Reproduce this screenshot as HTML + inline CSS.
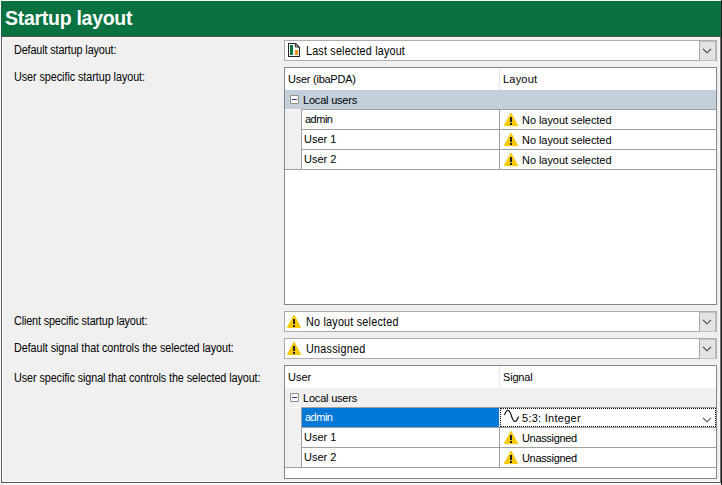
<!DOCTYPE html>
<html><head><meta charset="utf-8">
<style>
html,body{margin:0;padding:0;}
body{width:722px;height:485px;overflow:hidden;position:relative;background:#f4f4f4;font-family:"Liberation Sans",sans-serif;font-size:12px;color:#000;}
.a{position:absolute;}
.ic{position:absolute;display:block;}
.t{position:absolute;white-space:nowrap;line-height:14px;height:14px;}
.hdr{left:1px;top:1px;width:720px;height:35px;background:#0a7140;}
.title{left:5px;top:7px;font-size:19.5px;font-weight:bold;color:#fff;letter-spacing:-0.28px;line-height:22px;height:22px;}
.frame{left:1px;top:36px;width:719px;height:445px;border:1px solid #5a5a5a;border-right-color:#222;background:#f0f0f0;}
.inner{left:2px;top:37px;width:717px;height:443px;border:1px solid #fafafa;border-right-color:#f6f6f6;}
.combo{position:absolute;left:284px;width:431px;height:19px;border:1px solid #abadb3;background:#fff;}
.tbl{position:absolute;left:284px;width:431px;border:1px solid #828790;background:#fff;}
.minus{position:absolute;left:5px;top:5px;width:7px;height:7px;border:1px solid #8e8e8e;border-radius:1px;background:#fbfbfb;}
.minus:after{content:"";position:absolute;left:1px;top:3px;width:5px;height:1px;background:#253a8a;}
</style></head><body>
<div class="a" style="left:0;top:0;width:722px;height:485px;background:#fafafa"></div>
<div class="a" style="left:1px;top:36px;width:719px;height:446px;background:#f0f0f0"></div>
<div class="a hdr"></div>
<div class="t title">Startup layout</div>
<div class="a" style="left:1px;top:36px;width:720px;height:1px;background:#4e4e4e"></div>
<div class="a" style="left:1px;top:36px;width:1px;height:447px;background:#5c5c5c"></div>
<div class="a" style="left:1px;top:482px;width:720px;height:1px;background:#585858"></div>
<div class="a" style="left:2px;top:37px;width:1px;height:445px;background:#fbfbfb"></div>
<div class="a" style="left:2px;top:37px;width:718px;height:1px;background:#fbfbfb"></div>
<div class="a" style="left:2px;top:481px;width:718px;height:1px;background:#fbfbfb"></div>
<div class="a" style="left:719px;top:37px;width:1px;height:445px;background:#f7f7f7"></div>
<div class="a" style="left:720px;top:37px;width:1px;height:446px;background:#6a6a6a"></div>
<div class="a" style="left:721px;top:0;width:1px;height:485px;background:#222"></div>

<div class="t" style="left:14.10px;top:43px;font-size:12px;letter-spacing:-0.131px;transform:scaleX(0.9);transform-origin:0 0;">Default startup layout:</div>
<div class="t" style="left:14.10px;top:70px;font-size:12px;letter-spacing:-0.063px;transform:scaleX(0.9);transform-origin:0 0;">User specific startup layout:</div>
<div class="t" style="left:14.10px;top:314px;font-size:12px;letter-spacing:-0.148px;transform:scaleX(0.9);transform-origin:0 0;">Client specific startup layout:</div>
<div class="t" style="left:14.10px;top:341px;font-size:12px;letter-spacing:-0.081px;transform:scaleX(0.9);transform-origin:0 0;">Default signal that controls the selected layout:</div>
<div class="t" style="left:14.10px;top:371px;font-size:12px;letter-spacing:-0.091px;transform:scaleX(0.9);transform-origin:0 0;">User specific signal that controls the selected layout:</div>
<div class="combo" style="top:40px;"></div><div class="a" style="left:699px;top:40px;width:1px;height:21px;background:#a8a8a8"></div><div class="a" style="left:700px;top:41px;width:15px;height:18px;border:1px solid #c2c2c2;border-left:0;background:#e3e3e3"></div><svg class="ic" style="left:702px;top:48px" width="10" height="6" viewBox="0 0 10 6"><path d="M1,0.8 L5,4.8 L9,0.8" fill="none" stroke="#444" stroke-width="1.15"/></svg>
<svg class="ic" style="left:288px;top:43px" width="12" height="14" viewBox="0 0 12 14"><path d="M0.5,0.5 H7.5 L11.5,4.5 V13.5 H0.5 Z" fill="#fff" stroke="#222" stroke-width="1.1" stroke-linejoin="round"/><path d="M7.3,0.8 V4 H11.2" fill="none" stroke="#222" stroke-width="1"/><rect x="2" y="2" width="3" height="10" fill="#0b7a3e"/><rect x="7" y="7" width="3" height="5" fill="#f39200"/></svg>
<div class="t" style="left:306.10px;top:44px;font-size:12px;letter-spacing:0.199px;transform:scaleX(0.9);transform-origin:0 0;">Last selected layout</div>
<div class="tbl" style="top:67px;height:236px;"><div class="a" style="left:214px;top:0;width:1px;height:22px;background:#e5e5e5;"></div><div class="a" style="left:0;top:22px;width:431px;height:19px;background:#c3cfdb;"><div class="minus"></div></div><div class="a" style="left:0;top:41px;width:16px;height:61px;background:#f0f0f0;"></div></div><div class="a" style="left:301px;top:109px;width:415px;height:1px;background:#a0a0a0;"></div><div class="a" style="left:301px;top:129px;width:415px;height:1px;background:#a0a0a0;"></div><div class="a" style="left:301px;top:149px;width:415px;height:1px;background:#a0a0a0;"></div><div class="a" style="left:285px;top:169px;width:431px;height:1px;background:#a0a0a0;"></div><div class="a" style="left:285px;top:109px;width:16px;height:1px;background:#f8f8f8;"></div><div class="a" style="left:301px;top:109px;width:1px;height:61px;background:#a0a0a0;"></div><div class="a" style="left:499px;top:109px;width:1px;height:61px;background:#a0a0a0;"></div><div class="t" style="left:288px;top:72px;font-size:11px;letter-spacing:-0.25px;">User (ibaPDA)</div><div class="t" style="left:503px;top:72px;font-size:11px;letter-spacing:0.2px;">Layout</div><div class="t" style="left:303px;top:93px;font-size:11px;letter-spacing:-0.2px;">Local users</div><div class="t" style="left:305px;top:112px;font-size:11px;letter-spacing:-0.5px;">admin</div><svg class="ic" style="left:503px;top:112px" width="16" height="15" viewBox="0 0 16 15"><path d="M8,1.2 L14.6,13.6 L1.4,13.6 Z" fill="#f8c800" stroke="#f8c800" stroke-width="1" stroke-linejoin="round"/><rect x="7" y="5" width="2" height="5" fill="#202028"/><rect x="7" y="11" width="2" height="2" fill="#202028"/></svg><div class="t" style="left:522px;top:113px;font-size:11px;letter-spacing:-0.059px;">No layout selected</div><div class="t" style="left:304px;top:132px;font-size:11px;letter-spacing:0.0px;">User 1</div><svg class="ic" style="left:503px;top:132px" width="16" height="15" viewBox="0 0 16 15"><path d="M8,1.2 L14.6,13.6 L1.4,13.6 Z" fill="#f8c800" stroke="#f8c800" stroke-width="1" stroke-linejoin="round"/><rect x="7" y="5" width="2" height="5" fill="#202028"/><rect x="7" y="11" width="2" height="2" fill="#202028"/></svg><div class="t" style="left:522px;top:133px;font-size:11px;letter-spacing:-0.059px;">No layout selected</div><div class="t" style="left:304px;top:152px;font-size:11px;letter-spacing:0.0px;">User 2</div><svg class="ic" style="left:503px;top:152px" width="16" height="15" viewBox="0 0 16 15"><path d="M8,1.2 L14.6,13.6 L1.4,13.6 Z" fill="#f8c800" stroke="#f8c800" stroke-width="1" stroke-linejoin="round"/><rect x="7" y="5" width="2" height="5" fill="#202028"/><rect x="7" y="11" width="2" height="2" fill="#202028"/></svg><div class="t" style="left:522px;top:153px;font-size:11px;letter-spacing:-0.059px;">No layout selected</div>
<div class="combo" style="top:311px;"></div><div class="a" style="left:699px;top:311px;width:1px;height:21px;background:#a8a8a8"></div><div class="a" style="left:700px;top:312px;width:15px;height:18px;border:1px solid #c2c2c2;border-left:0;background:#e3e3e3"></div><svg class="ic" style="left:702px;top:319px" width="10" height="6" viewBox="0 0 10 6"><path d="M1,0.8 L5,4.8 L9,0.8" fill="none" stroke="#444" stroke-width="1.15"/></svg>
<svg class="ic" style="left:286px;top:314px" width="16" height="15" viewBox="0 0 16 15"><path d="M8,1.2 L14.6,13.6 L1.4,13.6 Z" fill="#f8c800" stroke="#f8c800" stroke-width="1" stroke-linejoin="round"/><rect x="7" y="5" width="2" height="5" fill="#202028"/><rect x="7" y="11" width="2" height="2" fill="#202028"/></svg>
<div class="t" style="left:306.10px;top:315px;font-size:12px;letter-spacing:0.235px;transform:scaleX(0.9);transform-origin:0 0;">No layout selected</div>
<div class="combo" style="top:338px;"></div><div class="a" style="left:699px;top:338px;width:1px;height:21px;background:#a8a8a8"></div><div class="a" style="left:700px;top:339px;width:15px;height:18px;border:1px solid #c2c2c2;border-left:0;background:#e3e3e3"></div><svg class="ic" style="left:702px;top:346px" width="10" height="6" viewBox="0 0 10 6"><path d="M1,0.8 L5,4.8 L9,0.8" fill="none" stroke="#444" stroke-width="1.15"/></svg>
<svg class="ic" style="left:286px;top:341px" width="16" height="15" viewBox="0 0 16 15"><path d="M8,1.2 L14.6,13.6 L1.4,13.6 Z" fill="#f8c800" stroke="#f8c800" stroke-width="1" stroke-linejoin="round"/><rect x="7" y="5" width="2" height="5" fill="#202028"/><rect x="7" y="11" width="2" height="2" fill="#202028"/></svg>
<div class="t" style="left:306.10px;top:342px;font-size:12px;letter-spacing:0.259px;transform:scaleX(0.9);transform-origin:0 0;">Unassigned</div>
<div class="tbl" style="top:365px;height:112px;"><div class="a" style="left:214px;top:0;width:1px;height:22px;background:#e5e5e5;"></div><div class="a" style="left:0;top:22px;width:431px;height:19px;background:#f0f0f0;"><div class="minus"></div></div><div class="a" style="left:0;top:41px;width:16px;height:61px;background:#f0f0f0;"></div></div><div class="a" style="left:301px;top:407px;width:415px;height:1px;background:#a0a0a0;"></div><div class="a" style="left:301px;top:427px;width:415px;height:1px;background:#a0a0a0;"></div><div class="a" style="left:301px;top:447px;width:415px;height:1px;background:#a0a0a0;"></div><div class="a" style="left:285px;top:467px;width:431px;height:1px;background:#a0a0a0;"></div><div class="a" style="left:285px;top:407px;width:16px;height:1px;background:#f8f8f8;"></div><div class="a" style="left:301px;top:407px;width:1px;height:61px;background:#a0a0a0;"></div><div class="a" style="left:499px;top:407px;width:1px;height:61px;background:#a0a0a0;"></div><div class="a" style="left:302px;top:408px;width:197px;height:19px;background:#0078d7;"></div><div class="a" style="left:499px;top:408px;width:1px;height:19px;background:#fff;"></div><div class="a" style="left:500px;top:408px;width:214px;height:17px;border:1px dotted #000;background:#fff;"></div><div class="t" style="left:288px;top:370px;font-size:11px;letter-spacing:0.0px;">User</div><div class="t" style="left:503px;top:370px;font-size:11px;letter-spacing:-0.2px;">Signal</div><div class="t" style="left:303px;top:391px;font-size:11px;letter-spacing:-0.2px;">Local users</div><div class="t" style="left:305px;top:410px;font-size:11px;letter-spacing:-0.5px;color:#fff;">admin</div><svg class="ic" style="left:503px;top:409px" width="18" height="14" viewBox="0 0 18 14"><path d="M1.5,6 C2.5,3 3.5,1.5 5,1.5 C7,1.5 7.5,4 8.5,7 C9.5,10 10,12.5 12,12.5 C13.5,12.5 14.5,10.5 15.5,7.5" fill="none" stroke="#000" stroke-width="1.1"/></svg><div class="t" style="left:522px;top:411px;font-size:11px;letter-spacing:0.273px;">5:3: Integer</div><svg class="ic" style="left:702px;top:417px" width="10" height="6" viewBox="0 0 10 6"><path d="M1,0.8 L5,4.8 L9,0.8" fill="none" stroke="#606060" stroke-width="1.2"/></svg><div class="t" style="left:304px;top:430px;font-size:11px;letter-spacing:0.0px;">User 1</div><svg class="ic" style="left:503px;top:430px" width="16" height="15" viewBox="0 0 16 15"><path d="M8,1.2 L14.6,13.6 L1.4,13.6 Z" fill="#f8c800" stroke="#f8c800" stroke-width="1" stroke-linejoin="round"/><rect x="7" y="5" width="2" height="5" fill="#202028"/><rect x="7" y="11" width="2" height="2" fill="#202028"/></svg><div class="t" style="left:522px;top:431px;font-size:11px;letter-spacing:-0.333px;">Unassigned</div><div class="t" style="left:304px;top:450px;font-size:11px;letter-spacing:0.0px;">User 2</div><svg class="ic" style="left:503px;top:450px" width="16" height="15" viewBox="0 0 16 15"><path d="M8,1.2 L14.6,13.6 L1.4,13.6 Z" fill="#f8c800" stroke="#f8c800" stroke-width="1" stroke-linejoin="round"/><rect x="7" y="5" width="2" height="5" fill="#202028"/><rect x="7" y="11" width="2" height="2" fill="#202028"/></svg><div class="t" style="left:522px;top:451px;font-size:11px;letter-spacing:-0.333px;">Unassigned</div>
</body></html>
